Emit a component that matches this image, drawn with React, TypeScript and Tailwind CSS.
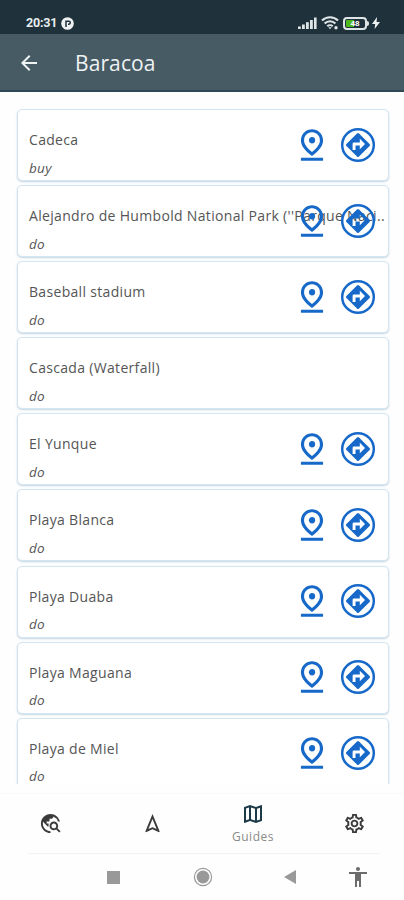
import {
  MdAccessibility,
  MdArrowBack,
  MdOutlineMap,
  MdOutlineNavigation,
  MdOutlinePinDrop,
  MdOutlineSettings,
  MdTravelExplore,
} from "react-icons/md";

interface Place {
  name: string;
  kind: string;
  hasLocation: boolean;
}

const places: Place[] = [
  { name: "Cadeca", kind: "buy", hasLocation: true },
  {
    name: "Alejandro de Humbold National Park (''Parque Naci..",
    kind: "do",
    hasLocation: true,
  },
  { name: "Baseball stadium", kind: "do", hasLocation: true },
  { name: "Cascada (Waterfall)", kind: "do", hasLocation: false },
  { name: "El Yunque", kind: "do", hasLocation: true },
  { name: "Playa Blanca", kind: "do", hasLocation: true },
  { name: "Playa Duaba", kind: "do", hasLocation: true },
  { name: "Playa Maguana", kind: "do", hasLocation: true },
  { name: "Playa de Miel", kind: "do", hasLocation: true },
];

const StatusBar = () => (
  <div className="flex h-[34px] shrink-0 items-start justify-between bg-[#1f323c] pr-[24px] pl-[26px] pt-[15px] text-[#e8eef0]">
    <div className="flex h-4 items-center gap-[4px]">
      <span className="font-['Roboto'] text-[12.5px] leading-4 font-bold tracking-[-0.2px]">
        20:31
      </span>
      <svg width="13" height="13" viewBox="0 0 13 13">
        <circle cx="6.5" cy="6.5" r="6.3" fill="#eef2f3" />
        <path
          d="M5 10V4.2h2.8a1.5 1.5 0 0 1 0 3H7"
          fill="none"
          stroke="#1f323c"
          strokeWidth="1.5"
        />
      </svg>
    </div>
    <div className="flex h-4 items-center gap-[4px]">
      <svg width="19" height="13" viewBox="0 0 19 13" fill="#dfe5e7">
        <rect x="0" y="9.5" width="2.8" height="2.5" />
        <rect x="4" y="7.5" width="2.8" height="4.5" />
        <rect x="8" y="5.2" width="2.8" height="6.8" />
        <rect x="12" y="3" width="2.8" height="9" />
        <rect x="16" y="0.5" width="2.6" height="11.5" />
      </svg>
      <svg
        width="18"
        height="14"
        viewBox="0 0 18 14"
        fill="none"
        stroke="#dfe5e7"
        strokeWidth="2.1"
      >
        <path d="M1 4.5a11.5 11.5 0 0 1 16 0M3.6 7.5a7.6 7.6 0 0 1 10.8 0M6.3 10.3a3.9 3.9 0 0 1 5.4 0" />
        <path d="M7.3 11.3h3.4L9 13.3z" fill="#dfe5e7" stroke="none" />
        <circle cx="15" cy="11.8" r="1.7" fill="#dfe5e7" stroke="none" />
      </svg>
      <div className="flex items-center">
        <div className="relative h-[13px] w-[24px] overflow-hidden rounded-[4px] border-2 border-[#dfe5e7] p-px">
          <div className="h-full w-[8px] rounded-l-[1px] bg-[#4cb81e]" />
          <span className="absolute inset-0 text-center font-['Roboto'] text-[8px] leading-[9px] font-bold text-white">
            48
          </span>
        </div>
        <div className="h-[5px] w-[2px] rounded-r bg-[#dfe5e7]" />
        <svg className="ml-[3px]" width="8" height="12" viewBox="0 0 8 12">
          <path d="M5 0 0 7h3.2L2.6 12 8 5H4.6z" fill="#eef2f3" />
        </svg>
      </div>
    </div>
  </div>
);

const DirectionsIcon = () => (
  <svg width="38" height="38" viewBox="0 0 38 38">
    <circle
      cx="19"
      cy="19"
      r="15.8"
      fill="none"
      stroke="currentColor"
      strokeWidth="2.5"
    />
    {/* the arrow is cut out of the diamond */}
    <path
      fill="currentColor"
      fillRule="evenodd"
      d="M18 7.4a1.4 1.4 0 0 1 2 0L30.6 18a1.4 1.4 0 0 1 0 2L20 30.6a1.4 1.4 0 0 1-2 0L7.400 20a1.400 1.400 0 0 1 0-2zM13.600 24v-6.200a1.400 1.400 0 0 1 1.400-1.400h5.800v-3.600l5.200 5.200-5.200 5.200v-3.700h-4.300V24z"
    />
  </svg>
);

const PlaceCard = ({ name, kind, hasLocation }: Place) => (
  <li className="relative mb-[4.1px] h-[72px] shrink-0 rounded-[5px] border-[1.5px] border-[#d3e5f1] bg-white pt-[19px] pl-[11.5px] shadow-[0_1px_2px_#c3d5e1]">
    <p className="text-[14px] leading-[22px] tracking-[0.32px] whitespace-nowrap text-[#555555]">
      {name}
    </p>
    <p className="mt-[9.5px] text-[13.5px] leading-[14px] tracking-[0.3px] text-[#555555] italic">
      {kind}
    </p>
    {hasLocation && (
      <div className="absolute top-[15.5px] right-[11px] flex gap-[7.5px] text-[#1769c9]">
        <MdOutlinePinDrop size={38} />
        <DirectionsIcon />
      </div>
    )}
  </li>
);

const TabBar = () => (
  <nav className="grid h-[60px] shrink-0 grid-cols-4 border-t border-[#f8f8f8] text-[#3b3b3b]">
    <div className="flex items-center justify-center">
      <MdTravelExplore size={23} />
    </div>
    <div className="flex items-center justify-center pl-px">
      <MdOutlineNavigation size={23} />
    </div>
    <div className="flex flex-col items-center pt-[8px] pl-px">
      <MdOutlineMap size={24} className="text-[#1d3a48]" />
      <span className="mt-[2px] text-[12px] leading-[18px] tracking-[0.5px] text-[#8a8a8a]">
        Guides
      </span>
    </div>
    <div className="flex items-center justify-center pl-px">
      <MdOutlineSettings size={23} />
    </div>
  </nav>
);

const SystemBar = () => (
  <div className="ml-[28px] flex h-[47px] w-[352px] shrink-0 items-center border-t border-[#f3f3f3] pl-[79px]">
    <div className="size-[13px] bg-[#999999]" />
    <svg className="ml-[73px]" width="20" height="20" viewBox="0 0 20 20">
      <circle cx="10" cy="10" r="8.6" fill="none" stroke="#999" strokeWidth="1.2" />
      <circle cx="10" cy="10" r="6.4" fill="#999" />
    </svg>
    <svg className="ml-[71px]" width="12" height="14" viewBox="0 0 12 14">
      <path d="M12 0v14L0 7z" fill="#999" />
    </svg>
    <MdAccessibility className="ml-[50px] text-[#6c6c6c]" size={24} />
  </div>
);

export default function App() {
  return (
    <div className="flex h-[900px] w-[404px] flex-col overflow-hidden bg-[#fefefe] font-['Open_Sans','Noto_Sans',sans-serif]">
      <StatusBar />
      <header className="flex h-[58px] shrink-0 items-center border-b-2 border-[#2e4955] bg-[#475b65] pt-[2px] pl-[17px] text-[#eef2f3]">
        <MdArrowBack size={24} />
        <h1 className="ml-[34px] text-[21px] leading-7 tracking-[0.1px]">
          Baracoa
        </h1>
      </header>
      <ul className="flex h-[692px] shrink-0 flex-col overflow-hidden pt-[17px] pr-[15.5px] pl-[16.5px]">
        {places.map((place) => (
          <PlaceCard key={place.name} {...place} />
        ))}
      </ul>
      <div className="h-[9px] shrink-0" />
      <TabBar />
      <SystemBar />
    </div>
  );
}
